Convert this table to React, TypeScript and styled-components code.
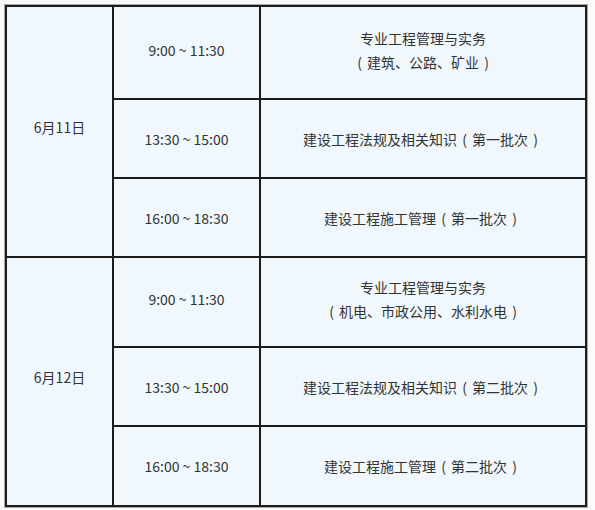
import React from "react";
import styled, { createGlobalStyle } from "styled-components";

const Global = createGlobalStyle`
  html, body { margin: 0; padding: 0; background: #fbfbfb; }
  body {
    font-family: "Noto Sans CJK SC", "Noto Sans", sans-serif;
    color: #333;
  }
`;

const Page = styled.div`
  padding: 4px;
  width: 595px;
  box-sizing: border-box;
`;

const Frame = styled.div`
  display: inline-block;
  border: 1px solid #a8a8a8;
  line-height: 0;
`;

const Table = styled.table`
  border-collapse: collapse;
  table-layout: fixed;
  width: 582px;
  background: #f0f8fe;
  border: 2px solid #1c1c1c;
`;

const Cell = styled.td<{ $h?: number; $pb?: number }>`
  border: 2px solid #1c1c1c;
  padding: 0 4px ${(p) => p.$pb ?? 0}px;
  height: ${(p) => p.$h ?? 79}px;
  box-sizing: border-box;
  text-align: center;
  vertical-align: middle;
  font-size: 14px;
  line-height: 24px;
  color: #333;
`;

const Line = styled.div`
  white-space: nowrap;
`;

const Paren = styled.span`
  display: inline-block;
  width: 15px;
  text-align: center;
`;

type Session = { time: string; subject: string[]; h: number; pb?: number };
type Day = { date: string; sessions: Session[] };

const days: Day[] = [
  {
    date: "6月11日",
    sessions: [
      { time: "9:00 ~ 11:30", subject: ["专业工程管理与实务", "（建筑、公路、矿业）"], h: 93, pb: 6 },
      { time: "13:30 ~ 15:00", subject: ["建设工程法规及相关知识（第一批次）"], h: 79 },
      { time: "16:00 ~ 18:30", subject: ["建设工程施工管理（第一批次）"], h: 79 },
    ],
  },
  {
    date: "6月12日",
    sessions: [
      { time: "9:00 ~ 11:30", subject: ["专业工程管理与实务", "（机电、市政公用、水利水电）"], h: 90, pb: 6 },
      { time: "13:30 ~ 15:00", subject: ["建设工程法规及相关知识（第二批次）"], h: 79 },
      { time: "16:00 ~ 18:30", subject: ["建设工程施工管理（第二批次）"], h: 80 },
    ],
  },
];

function renderText(t: string) {
  return t.split(/([（）])/).map((part, i) =>
    part === "（" ? (
      <Paren key={i}>(</Paren>
    ) : part === "）" ? (
      <Paren key={i}>)</Paren>
    ) : (
      <React.Fragment key={i}>{part}</React.Fragment>
    )
  );
}

export default function App() {
  return (
    <Page>
      <Global />
      <Frame>
        <Table>
          <colgroup>
            <col style={{ width: 107 }} />
            <col style={{ width: 147 }} />
            <col />
          </colgroup>
          <tbody>
            {days.map((d) =>
              d.sessions.map((s, i) => (
                <tr key={d.date + i}>
                  {i === 0 && (
                    <Cell rowSpan={d.sessions.length} $pb={10}>
                      <Line>{d.date}</Line>
                    </Cell>
                  )}
                  <Cell $h={s.h} $pb={s.pb}>
                    <Line>{s.time}</Line>
                  </Cell>
                  <Cell $h={s.h} $pb={s.pb}>
                    {s.subject.map((t) => (
                      <Line key={t}>{renderText(t)}</Line>
                    ))}
                  </Cell>
                </tr>
              ))
            )}
          </tbody>
        </Table>
      </Frame>
    </Page>
  );
}
